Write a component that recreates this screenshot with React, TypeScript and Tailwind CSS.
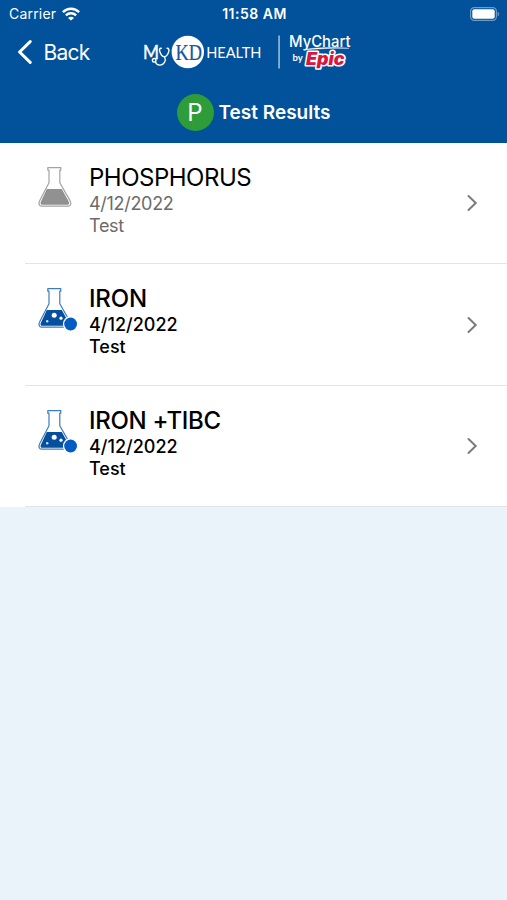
import clsx from "clsx";

type TestResult = {
  name: string;
  date: string;
  kind: string;
  unread: boolean;
  nameTracking: string;
};

const results: TestResult[] = [
  { name: "PHOSPHORUS", date: "4/12/2022", kind: "Test", unread: false, nameTracking: "tracking-[-0.5px]" },
  { name: "IRON", date: "4/12/2022", kind: "Test", unread: true, nameTracking: "tracking-[-0.2px]" },
  { name: "IRON +TIBC", date: "4/12/2022", kind: "Test", unread: true, nameTracking: "tracking-[-0.3px]" },
];

function WifiIcon() {
  return (
    <svg className="h-[14px] w-[18px]" viewBox="0 0 18 14" fill="none" stroke="white" strokeWidth="2.5">
      <path d="M0.9 5.1C5.4 0.5 12.6 0.5 17.1 5.1" />
      <path d="M3.9 8.4C6.7 5.6 11.3 5.6 14.1 8.4" />
      <path d="M9 13.6 6 10.9C7.8 9.2 10.2 9.2 12 10.9Z" fill="white" stroke="none" />
    </svg>
  );
}

function BatteryIcon() {
  return (
    <svg className="h-[14px] w-[30px]" viewBox="0 0 30 14">
      <rect x="0.6" y="0.6" width="25.8" height="12.8" rx="3.6" fill="none" stroke="#6f9bc8" strokeWidth="1.2" />
      <rect x="2.3" y="2.3" width="22.4" height="9.4" rx="2" fill="white" />
      <path d="M27.6 4.7C29.6 5.5 29.6 8.5 27.6 9.3Z" fill="#6f9bc8" />
    </svg>
  );
}

function StatusBar() {
  return (
    <div className="grid h-[27px] grid-cols-3 items-center pl-[9px] pr-[7px] text-white">
      <div className="flex items-center gap-[6px] text-[14px]">
        <span className="tracking-[0.2px]">Carrier</span>
        <WifiIcon />
      </div>
      <span className="text-center text-[14px] font-semibold tracking-[0.5px]">11:58 AM</span>
      <div className="flex justify-end">
        <BatteryIcon />
      </div>
    </div>
  );
}

function BrandLogo() {
  return (
    <svg className="h-[50px] w-[220px] overflow-visible" viewBox="142 27 220 50" fill="white">
      <text x="143" y="58.5" fontFamily="Lato" fontSize="19" stroke="white" strokeWidth="0.4" textLength="16" lengthAdjust="spacingAndGlyphs">
        M
      </text>
      {/* stethoscope standing in for the "y" */}
      <g fill="none" stroke="white" strokeWidth="1.4" strokeLinecap="round">
        <path d="M161.3 48.3C159.4 48.1 159.2 49.8 159.8 51.5C160.7 54.5 162.3 56.7 164.3 56.7C166.5 56.7 168 54.4 168.8 51.4C169.3 49.7 168.9 48.2 167.1 48.3" />
        <path d="M164.6 57C166.6 60.5 163.8 65.2 159.8 65.1C156.5 65 155.8 63.2 155.4 61.9" />
        <circle cx="154.2" cy="60.3" r="1.8" />
      </g>
      <circle cx="187.8" cy="52" r="16.2" />
      <text x="175.6" y="59.5" fill="#17559d" stroke="#17559d" strokeWidth="0.2" fontFamily="Liberation Serif" fontSize="22.5" textLength="26.5" lengthAdjust="spacingAndGlyphs">
        KD
      </text>
      <text x="206.2" y="57.5" fontFamily="Lato" fontSize="15" textLength="55.3" lengthAdjust="spacingAndGlyphs">
        HEALTH
      </text>
      <rect x="278.4" y="35.5" width="1.3" height="33" fill="#bfd3e8" />
      <text x="289" y="46.8" fontFamily="Inter" fontSize="15.5" fontWeight="500" textLength="61.5" lengthAdjust="spacingAndGlyphs">
        MyChart
      </text>
      <path d="M303 49.8C317 47.2 333 47 349 48.3C334 48 318 48.8 303 49.8Z" stroke="white" strokeWidth="0.4" />
      <text x="292.5" y="60.5" fontFamily="Lato" fontSize="9.5" fontWeight="700">
        by
      </text>
      <text
        x="306"
        y="65.3"
        fontFamily="Inter"
        fontSize="17"
        fontWeight="900"
        fontStyle="italic"
        fill="#d8163f"
        stroke="white"
        strokeWidth="3"
        strokeLinejoin="round"
        paintOrder="stroke"
        textLength="38.5"
        lengthAdjust="spacingAndGlyphs"
      >
        Epic
      </text>
    </svg>
  );
}

function Header() {
  return (
    <header className="h-[142.5px] bg-[#01519b] text-white">
      <StatusBar />
      <div className="mt-px flex h-12 items-center">
        <button className="flex w-[142px] items-center gap-[12px] pl-[16.5px] text-[21px]" type="button">
          <svg className="h-6 w-[15px]" viewBox="0 0 15 24" fill="none" stroke="white" strokeWidth="3">
            <path d="M13.2 1.6 2.6 12 13.2 22.4" strokeLinecap="round" strokeLinejoin="round" />
          </svg>
          <span className="pt-px tracking-[-0.8px]">Back</span>
        </button>
        <BrandLogo />
      </div>
      <div className="flex h-[72px] items-center justify-center gap-[5px]">
        <span className="flex size-[37px] items-center justify-center rounded-full bg-[#2e9c38] pt-px text-[24px]">
          P
        </span>
        <h1 className="pt-[2px] text-[19px] font-semibold tracking-[0px]">Test Results</h1>
      </div>
    </header>
  );
}

function FlaskIcon({ unread }: { unread: boolean }) {
  const outline = unread ? "#3d7dbb" : "#a3a3a3";
  const liquid = unread ? "#064f9f" : "#919191";
  return (
    <svg className="h-[44px] w-[40px] shrink-0 overflow-visible" viewBox="0 0 40 44" fill="none">
      <path
        d="M8.8 0.6H21.8V3.2H20.8V15.8L31 33.6C32.7 36.9 31.6 39.2 28.6 39.2H3.2C0.2 39.2 -0.9 36.9 0.8 33.6L10 15.8V3.2H8.8Z"
        stroke={outline}
        strokeWidth="1.2"
        strokeLinejoin="round"
      />
      <path d="M7.8 22H22.8L29.7 34.4C30.7 36.4 29.9 37.8 28.1 37.8H3.5C1.7 37.8 1 36.4 2 34.4Z" fill={liquid} />
      {unread ? (
        <>
          <circle cx="15.2" cy="27.3" r="2.5" fill="white" />
          <circle cx="22" cy="30.2" r="1.6" fill="white" />
          <circle cx="8.2" cy="33.2" r="1.2" fill="#cfe0f0" />
          <circle cx="31.6" cy="36" r="7.7" fill="white" />
          <circle cx="31.6" cy="36" r="6.4" fill="#035cc3" />
        </>
      ) : null}
    </svg>
  );
}

function ResultRow({ result }: { result: TestResult }) {
  const detailTracking = result.unread ? "tracking-[0px]" : "tracking-[-0.3px]";

  return (
    <li className="h-[121.5px] pl-[25px]">
      <button
        className="flex h-full w-full items-start border-b border-[#e2e4e6] pl-[14px] pr-[29px] text-left"
        type="button"
      >
        <span className="pt-[24px]">
          <FlaskIcon unread={result.unread} />
        </span>
        <span
          className={clsx(
            "flex flex-1 flex-col pl-[10px] pt-[19px]",
            result.unread ? "font-medium text-black" : "font-normal text-[#6b6b6b]",
          )}
        >
          <span className={clsx("text-[24px] leading-[31px] text-black", result.nameTracking)}>{result.name}</span>
          <span className={clsx("text-[18px] leading-[22px]", detailTracking)}>{result.date}</span>
          <span className={clsx("text-[18px] leading-[22px]", detailTracking)}>{result.kind}</span>
        </span>
        <svg
          className="mt-[51.5px] h-[18px] w-[12px]"
          viewBox="0 0 12 18"
          fill="none"
          stroke="#7c7c7c"
          strokeWidth="2"
          strokeLinecap="round"
        >
          <path d="M2.5 2 9.7 9 2.5 16" />
        </svg>
      </button>
    </li>
  );
}

export default function App() {
  return (
    <main className="h-[900px] w-[507px] overflow-hidden bg-[#eaf2fa] font-['Inter',sans-serif]">
      <Header />
      <ul className="bg-white">
        {results.map((result) => (
          <ResultRow key={result.name} result={result} />
        ))}
      </ul>
    </main>
  );
}
